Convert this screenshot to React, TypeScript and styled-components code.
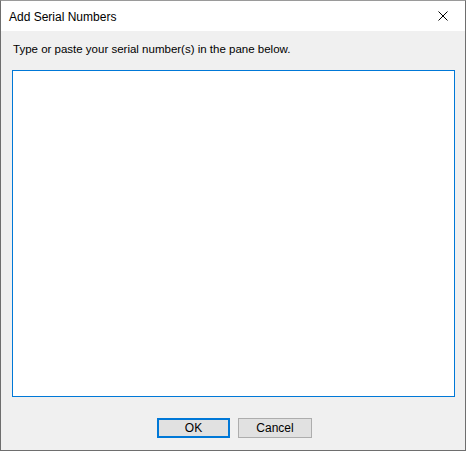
import React from "react";
import styled, { createGlobalStyle } from "styled-components";

const Global = createGlobalStyle`
  html, body { margin: 0; padding: 0; background: #f0f0f0; }
  * { box-sizing: border-box; }
`;

const Window = styled.div`
  width: 466px;
  height: 451px;
  display: flex;
  flex-direction: column;
  border: 1px solid #6e6e6e;
  border-top-color: #9a9a9a;
  background: #f0f0f0;
  font-family: "Liberation Sans", Arial, sans-serif;
  color: #000;
`;

const TitleBar = styled.div`
  height: 30px;
  background: #ffffff;
  display: flex;
  align-items: center;
  justify-content: space-between;
  padding-left: 8px;
  flex-shrink: 0;
`;

const Title = styled.span`
  font-size: 12px;
  color: #000;
  margin-top: 1px;
`;

const CloseButton = styled.div`
  width: 46px;
  height: 30px;
  display: flex;
  align-items: center;
  justify-content: center;
  margin-right: -1px;
`;

const Body = styled.div`
  flex: 1;
  display: flex;
  flex-direction: column;
  padding: 10px 10px 0 11px;
`;

const Label = styled.div`
  font-size: 11.5px;
  line-height: 16px;
  height: 16px;
  margin-bottom: 13px;
  padding-left: 1px;
`;

const Pane = styled.textarea`
  width: 443px;
  height: 327px;
  border: 1px solid #0078d7;
  background: #ffffff;
  outline: none;
  resize: none;
  margin: 0;
  padding: 2px 4px;
  font-family: "Liberation Sans", Arial, sans-serif;
  font-size: 12px;
`;

const ButtonRow = styled.div`
  display: flex;
  justify-content: center;
  gap: 8px;
  margin-top: 21px;
  padding-left: 2px;
`;

const Button = styled.button<{ $default?: boolean }>`
  width: ${(p) => (p.$default ? "73px" : "74px")};
  height: 20px;
  background: #e1e1e1;
  border: ${(p) => (p.$default ? "2px solid #0078d7" : "1px solid #adadad")};
  font-family: "Liberation Sans", Arial, sans-serif;
  font-size: 12px;
  color: #000;
  padding: 0;
  margin: 0;
  display: flex;
  align-items: center;
  justify-content: center;
`;

export default function App() {
  return (
    <>
      <Global />
      <Window>
        <TitleBar>
          <Title>Add Serial Numbers</Title>
          <CloseButton>
            <svg width="10" height="10" viewBox="0 0 10 10">
              <path d="M0.5 0.5 L9.5 9.5 M9.5 0.5 L0.5 9.5" stroke="#000" strokeWidth="1" fill="none" />
            </svg>
          </CloseButton>
        </TitleBar>
        <Body>
          <Label>Type or paste your serial number(s) in the pane below.</Label>
          <Pane />
          <ButtonRow>
            <Button $default>OK</Button>
            <Button>Cancel</Button>
          </ButtonRow>
        </Body>
      </Window>
    </>
  );
}
